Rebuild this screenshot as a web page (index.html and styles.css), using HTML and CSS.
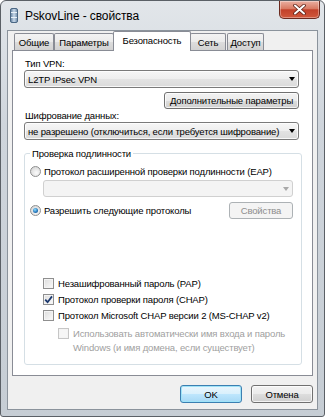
FILE: index.html
```html
<!DOCTYPE html>
<html lang="ru">
<head>
    <meta charset="UTF-8">
    <title>PskovLine - свойства</title>
    <link rel="stylesheet" href="styles.css">
</head>
<body>
    <div class="window">
        <div class="titlebar">
            <svg class="app-icon" width="8" height="15" viewBox="0 0 8 15">
                <defs>
                    <linearGradient id="tower" x1="0" y1="0" x2="1" y2="0">
                        <stop offset="0" stop-color="#5f7d9c"/>
                        <stop offset="0.5" stop-color="#c9d9ea"/>
                        <stop offset="1" stop-color="#6c89a6"/>
                    </linearGradient>
                </defs>
                <rect x="0.5" y="0.5" width="7" height="14" rx="1.5" fill="url(#tower)" stroke="#4b6784"/>
                <line x1="1" y1="4.5" x2="7" y2="4.5" stroke="#e9f1f8"/>
                <line x1="1" y1="9.5" x2="7" y2="9.5" stroke="#e9f1f8"/>
            </svg>
            <span class="title">PskovLine - свойства</span>
            <div class="close-btn">
                <svg width="13" height="11" viewBox="0 0 13 11">
                    <path d="M2 1.5 L11 9.5 M11 1.5 L2 9.5" stroke="#5a2117" stroke-width="3.6" stroke-linecap="round"/>
                    <path d="M2 1.5 L11 9.5 M11 1.5 L2 9.5" stroke="#fff" stroke-width="2" stroke-linecap="round"/>
                </svg>
            </div>
        </div>

        <div class="client">
            <div class="tabs">
                <div class="tab tab-general">Общие</div>
                <div class="tab tab-params">Параметры</div>
                <div class="tab tab-security active">Безопасность</div>
                <div class="tab tab-net">Сеть</div>
                <div class="tab tab-access">Доступ</div>
            </div>

            <div class="panel">
                <div class="label first">Тип VPN:</div>
                <div class="combo">
                    <span class="value">L2TP IPsec VPN</span>
                    <span class="arrow"></span>
                </div>
                <button class="btn btn-advanced">Дополнительные параметры</button>

                <div class="label">Шифрование данных:</div>
                <div class="combo">
                    <span class="value">не разрешено (отключиться, если требуется шифрование)</span>
                    <span class="arrow"></span>
                </div>

                <fieldset class="group">
                    <legend>Проверка подлинности</legend>

                    <div class="radio-row first">
                        <span class="radio"></span>
                        <span>Протокол расширенной проверки подлинности (EAP)</span>
                    </div>
                    <div class="combo disabled eap-combo">
                        <span class="value"></span>
                        <span class="arrow"></span>
                    </div>

                    <div class="radio-row second">
                        <span class="radio checked"></span>
                        <span>Разрешить следующие протоколы</span>
                        <button class="btn disabled btn-props">Свойства</button>
                    </div>

                    <div class="check-row first">
                        <span class="check"></span>
                        <span>Незашифрованный пароль (PAP)</span>
                    </div>
                    <div class="check-row">
                        <span class="check checked">
                            <svg width="9" height="9" viewBox="0 0 9 9">
                                <path d="M1.2 4.6 L3.6 7.2 L8 1.4" fill="none" stroke="#1d3a6f" stroke-width="1.8"/>
                            </svg>
                        </span>
                        <span>Протокол проверки пароля (CHAP)</span>
                    </div>
                    <div class="check-row">
                        <span class="check"></span>
                        <span>Протокол Microsoft CHAP версии 2 (MS-CHAP v2)</span>
                    </div>
                    <div class="check-row sub disabled">
                        <span class="check"></span>
                        <span class="sub-text">Использовать автоматически имя входа и пароль<br>Windows (и имя домена, если существует)</span>
                    </div>
                </fieldset>
            </div>

            <div class="footer">
                <button class="btn default">OK</button>
                <button class="btn">Отмена</button>
            </div>
        </div>
    </div>
</body>
</html>
```

FILE: styles.css
```css
* {
    box-sizing: border-box;
}
body {
    margin: 0;
    font-family: "Liberation Sans", Arial, sans-serif;
    font-size: 9.5px;
    letter-spacing: -0.15px;
    color: #000;
    background: #fff;
}
.window {
    width: 325px;
    height: 417px;
    border: 1px solid #5b6066;
    border-radius: 6px 6px 3px 3px;
    background: linear-gradient(#e2e6ea, #cfd5dc 30%, #c6cdd4);
    display: flex;
    flex-direction: column;
    overflow: hidden;
}
.titlebar {
    height: 29px;
    flex: none;
    display: flex;
    align-items: center;
    padding-left: 9px;
}
.app-icon {
    margin-right: 7px;
}
.title {
    font-size: 12px;
    letter-spacing: -0.1px;
    color: #000;
}
.close-btn {
    margin-left: auto;
    margin-right: 4px;
    align-self: flex-start;
    width: 41px;
    height: 18px;
    border: 1px solid #6b2a1f;
    border-top: none;
    border-radius: 0 0 5px 5px;
    background: linear-gradient(#eab0a2, #d97a63 45%, #c2412a 52%, #d0583c);
    box-shadow: inset 0 0 0 1px rgba(255,255,255,0.35);
    display: flex;
    align-items: center;
    justify-content: center;
}
.client {
    flex: 1;
    margin: 0 6px 6px;
    border: 1px solid #8b939c;
    background: #f0f0f0;
    padding: 0 4px;
    display: flex;
    flex-direction: column;
}

/* вкладки */
.tabs {
    display: flex;
    align-items: flex-end;
    height: 19px;
    padding-left: 2px;
}
.tab {
    height: 17px;
    border: 1px solid #898c95;
    border-bottom: none;
    border-radius: 2px 2px 0 0;
    background: linear-gradient(#f3f3f3, #ebebeb 50%, #dddddd 51%, #d2d2d2);
    display: flex;
    align-items: center;
    justify-content: center;
    white-space: nowrap;
}
.tab-general { width: 40px; }
.tab-params { width: 60px; }
.tab-security { width: 78px; }
.tab-net { width: 36px; }
.tab-access { width: 37px; margin-left: 1px; }
.tab.active {
    height: 20px;
    margin: 0 -1px -1px;
    padding-bottom: 2px;
    background: #fff;
    position: relative;
    z-index: 1;
}

.panel {
    height: 326px;
    flex: none;
    border: 1px solid #898c95;
    background: #fff;
    padding: 0 13px 0 11px;
    display: flex;
    flex-direction: column;
}
.label {
    line-height: 13px;
    margin-left: 1px;
}
.label.first {
    margin-top: 6px;
}

/* выпадающие списки */
.combo {
    height: 18px;
    flex: none;
    border: 1px solid #7a7a7a;
    border-radius: 3px;
    background: linear-gradient(#f6f6f6, #eeeeee 50%, #e3e3e3 51%, #dadada);
    box-shadow: inset 0 0 0 1px rgba(255,255,255,0.8);
    display: flex;
    align-items: center;
    padding: 0 3px;
}
.combo .value {
    flex: 1;
    white-space: nowrap;
    overflow: hidden;
}
.arrow {
    width: 0;
    height: 0;
    border-left: 3.5px solid transparent;
    border-right: 3.5px solid transparent;
    border-top: 4px solid #000;
    margin-left: 4px;
}
.combo.disabled {
    border-color: #d0d0d0;
    background: #f4f4f4;
    box-shadow: none;
}
.combo.disabled .arrow {
    border-top-color: #a8a8a8;
}

/* кнопки */
.btn {
    font: inherit;
    letter-spacing: inherit;
    color: #000;
    height: 17px;
    padding: 0;
    white-space: nowrap;
    border: 1px solid #707070;
    border-radius: 3px;
    background: linear-gradient(#f2f2f2, #ebebeb 50%, #dddddd 51%, #cfcfcf);
    box-shadow: inset 0 0 0 1px rgba(255,255,255,0.75);
}
.btn-advanced {
    align-self: flex-end;
    width: 135px;
    margin-top: 4px;
}
.btn.disabled {
    color: #8d8d8d;
    border-color: #adb2b5;
    background: #f4f4f4;
    box-shadow: none;
}
.btn.default {
    border-color: #3c7fb1;
    background: linear-gradient(#eaf6fd, #d9f0fc 50%, #bee6fd 51%, #a7d9f5);
    box-shadow: inset 0 0 0 1px #9fe3f8;
}

/* группа */
.group {
    margin: 7px -3px 0 0;
    padding: 0 8px 9px 5px;
    min-width: 0;
    border: 1px solid #d5dfe5;
    border-radius: 3px;
    display: flex;
    flex-direction: column;
}
.group legend {
    padding: 0 2px;
    line-height: 13px;
}
.radio-row {
    display: flex;
    align-items: center;
    gap: 3px;
}
.radio-row.first {
    margin-top: 4px;
    height: 14px;
}
.radio-row.second {
    margin-top: 5px;
    height: 17px;
}
.radio {
    width: 11px;
    height: 11px;
    flex: none;
    border-radius: 50%;
    border: 1px solid #8e8f8f;
    background: radial-gradient(circle at 60% 65%, #fbfbfb, #dcdcdc 70%, #cfcfcf);
    display: flex;
    align-items: center;
    justify-content: center;
}
.radio.checked::after {
    content: "";
    width: 5px;
    height: 5px;
    border-radius: 50%;
    background: radial-gradient(circle at 40% 35%, #8fe0ff, #2b7cc0 55%, #0f3f75);
}
.eap-combo {
    height: 17px;
    margin: 2px 0 0 13px;
}
.btn-props {
    margin-left: auto;
    width: 64px;
}

.check-row {
    display: flex;
    align-items: center;
    gap: 4px;
    height: 16px;
    padding-left: 13px;
}
.check-row.first {
    margin-top: 56px;
}
.check {
    width: 11px;
    height: 11px;
    flex: none;
    border: 1px solid #8f8f8f;
    background: linear-gradient(135deg, #dcdcdc, #fbfbfb);
    box-shadow: inset 0 0 0 1px #f4f4f4;
    display: flex;
    align-items: center;
    justify-content: center;
}
.check-row.sub {
    height: auto;
    align-items: flex-start;
    padding-left: 28px;
    margin-top: 4px;
    color: #a0a0a0;
}
.check-row.sub .check {
    margin-top: 1px;
    border-color: #c6c6c6;
    background: #f6f6f6;
}
.sub-text {
    line-height: 14px;
    white-space: nowrap;
}

.footer {
    display: flex;
    justify-content: flex-end;
    gap: 9px;
    margin-top: 9px;
}
.footer .btn {
    width: 62px;
    height: 18px;
}
```
